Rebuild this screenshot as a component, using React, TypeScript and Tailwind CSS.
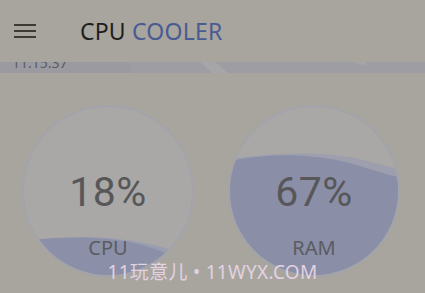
import React from 'react';

const font = { fontFamily: '"Noto Sans", "Noto Sans CJK SC", sans-serif' };
const numFont = { fontFamily: 'Roboto, sans-serif' };

function Gauge({ value, label, level }: { value: string; label: string; level: 'low' | 'high' }) {
  return (
    <div className="relative w-[172px] h-[172px] rounded-full bg-[#a9a8a7] border-[2px] border-[#a3a4ab] overflow-hidden">
      <svg className="absolute inset-0" width="168" height="168" viewBox="0 0 168 168">
        {level === 'low' ? (
          <>
            <path d="M0 138 C40 128 80 128 120 136 C140 140 160 146 168 148 L168 168 L0 168 Z" fill="#9a9db0" />
            <path d="M0 134 C30 130 70 128 110 136 C135 142 155 152 168 156 L168 168 L0 168 Z" fill="#8b8fa7" />
          </>
        ) : (
          <>
            <path d="M0 52 C40 46 80 44 120 50 C140 54 158 60 168 62 L168 168 L0 168 Z" fill="#9d9fae" />
            <path d="M0 54 C40 46 80 46 120 56 C140 62 158 68 168 70 L168 168 L0 168 Z" fill="#8a8ea6" />
          </>
        )}
      </svg>
      <div className="relative flex flex-col items-center h-full">
        <div className="mt-[65px] text-[41px] leading-none tracking-[0.5px] text-[#57575a]" style={numFont}>{value}</div>
        <div className="mt-[25px] text-[20px] leading-none text-[#5b5c62]">{label}</div>
      </div>
    </div>
  );
}

export default function App() {
  return (
    <div className="relative w-[425px] h-[293px] bg-[#a8a59f] overflow-hidden" style={font}>
      <div className="h-[62px] flex items-center">
        <div className="ml-[14px] w-[22px] flex flex-col gap-[4px]">
          <div className="h-[2px] bg-[#3d3a36]" />
          <div className="h-[2px] bg-[#3d3a36]" />
          <div className="h-[2px] bg-[#3d3a36]" />
        </div>
        <div className="ml-[44px] text-[23px] leading-none tracking-[0.2px]">
          <span className="text-[#1e1e1e]">CPU </span>
          <span className="text-[#4a5b92]">COOLER</span>
        </div>
      </div>
      <div className="relative h-[11px] bg-[#9d9da3] overflow-hidden">
        <svg className="absolute inset-0" width="425" height="11" viewBox="0 0 425 11">
          <rect x="0" y="0" width="130" height="11" fill="#9a9aa0" />
          <path d="M200 0 L215 0 L228 11 L212 11 Z" fill="#a6a5a8" />
          <path d="M350 0 L365 0 L368 4 Z" fill="#a6a5a8" />
        </svg>
        <div className="absolute left-[12px] top-[-9px] text-[14px] leading-[20px] text-[#5c5b5e]">11:15:37</div>
      </div>
      <div className="flex justify-between pl-[22px] pr-[25px] pt-[32px]">
        <Gauge value="18%" label="CPU" level="low" />
        <Gauge value="67%" label="RAM" level="high" />
      </div>
      <div className="absolute left-0 right-0 top-[258px] text-center text-[19px] tracking-[0.3px] text-[#e2d2e2]">
        11玩意儿 • 11WYX.COM
      </div>
    </div>
  );
}
